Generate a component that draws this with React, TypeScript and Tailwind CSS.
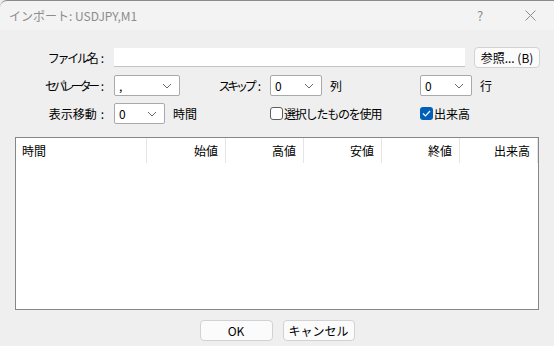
import React from 'react';

const font = { fontFamily: '"Noto Sans CJK JP", "Noto Sans", sans-serif' };

function Chevron() {
  return (
    <svg width="10" height="6" viewBox="0 0 10 6" className="shrink-0">
      <path d="M1 1 L5 5 L9 1" fill="none" stroke="#6b6b6b" strokeWidth="1" />
    </svg>
  );
}

function Select({ value, width }: { value: string; width: string }) {
  return (
    <div
      className={`${width} h-[21px] bg-white border border-[#a9a9a9] rounded-[2px] flex items-center justify-between pl-[4px] pr-[7px] text-[12px] text-black`}
    >
      <span>{value}</span>
      <Chevron />
    </div>
  );
}

function Column({ label, width, left }: { label: string; width: string; left?: boolean }) {
  return (
    <div
      className={`${width} h-[25px] flex items-center ${left ? 'justify-start pl-[6px]' : 'justify-end pr-[7px]'} border-r border-[#e5e5e5] text-[12px] text-black`}
    >
      {label}
    </div>
  );
}

function Label({ text, width, tracking }: { text: string; width: string; tracking: string }) {
  return (
    <div className={`${width} flex justify-end whitespace-nowrap`}>
      <span className={tracking}>{text}</span>
      <span className="ml-[4px] mr-[2px]">:</span>
    </div>
  );
}

function App() {
  return (
    <div className="w-[554px] h-[346px] bg-[#efefef] overflow-hidden select-none" style={font}>
      {/* Title bar */}
      <div className="h-[30px] bg-[#f3f3f3] border-t border-[#8a8a8a] rounded-tl-[7px] flex items-center justify-between">
        <span className="pl-[9px] text-[12px] text-[#8c8c8c]">インポート: USDJPY,M1</span>
        <div className="flex items-center">
          <span className="w-[20px] text-center text-[13px] text-[#8c8c8c]">?</span>
          <svg width="11" height="11" viewBox="0 0 11 11" className="ml-[35px] mr-[18px]">
            <path d="M0.5 0.5 L10.5 10.5 M10.5 0.5 L0.5 10.5" stroke="#8c8c8c" strokeWidth="1" />
          </svg>
        </div>
      </div>

      {/* Form */}
      <div className="pt-[17px] flex flex-col gap-[7px] text-[12px] text-black">
        <div className="h-[21px] flex items-center">
          <Label text="ファイル名" width="w-[106px]" tracking="tracking-[-2.2px]" />
          <div className="ml-[8px] w-[351px] h-[19px] bg-white border-b border-[#c4c4c4]" />
          <div className="ml-[9px] w-[66px] h-[21px] bg-[#fbfbfb] border border-[#d2d2d2] rounded-[4px] flex items-center justify-center">
            参照... (B)
          </div>
        </div>

        <div className="h-[21px] flex items-center">
          <Label text="セパレーター" width="w-[106px]" tracking="tracking-[-3.4px]" />
          <div className="ml-[8px]">
            <Select value="," width="w-[66px]" />
          </div>
          <Label text="スキップ" width="w-[83px]" tracking="tracking-[-3.2px]" />
          <div className="ml-[7px]">
            <Select value="0" width="w-[52px]" />
          </div>
          <div className="ml-[8px] w-[90px]">列</div>
          <Select value="0" width="w-[52px]" />
          <div className="ml-[8px]">行</div>
        </div>

        <div className="h-[21px] flex items-center">
          <Label text="表示移動" width="w-[106px]" tracking="tracking-[0px]" />
          <div className="ml-[8px]">
            <Select value="0" width="w-[51px]" />
          </div>
          <div className="ml-[8px] w-[97px]">時間</div>
          <div className="w-[150px] flex items-center">
            <div className="w-[13px] h-[13px] bg-white border border-[#5e5e5e] rounded-[3px]" />
            <span className="ml-[1px] tracking-[-1.2px]">選択したものを使用</span>
          </div>
          <div className="flex items-center">
            <div className="w-[13px] h-[13px] bg-[#005fb8] rounded-[3px] flex items-center justify-center">
              <svg width="9" height="7" viewBox="0 0 9 7">
                <path d="M1 3.5 L3.5 6 L8 1" fill="none" stroke="white" strokeWidth="1.2" />
              </svg>
            </div>
            <span className="ml-[1px]">出来高</span>
          </div>
        </div>
      </div>

      {/* Table */}
      <div className="mt-[13px] mx-[15px] h-[173px] bg-white border border-[#85858c]">
        <div className="flex">
          <Column label="時間" width="w-[131px]" left />
          <Column label="始値" width="w-[79px]" />
          <Column label="高値" width="w-[78px]" />
          <Column label="安値" width="w-[78px]" />
          <Column label="終値" width="w-[78px]" />
          <Column label="出来高" width="w-[78px]" />
        </div>
      </div>

      {/* Buttons */}
      <div className="mt-[10px] flex justify-center gap-[10px] text-[12px] text-black">
        <div className="w-[73px] h-[21px] bg-[#fbfbfb] border border-[#d2d2d2] rounded-[4px] flex items-center justify-center">
          OK
        </div>
        <div className="w-[72px] h-[21px] bg-[#fbfbfb] border border-[#d2d2d2] rounded-[4px] flex items-center justify-center">
          キャンセル
        </div>
      </div>
    </div>
  );
}

export default App;
